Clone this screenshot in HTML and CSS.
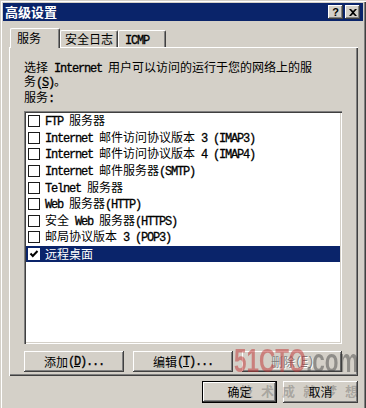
FILE: index.html
```html
<!DOCTYPE html>
<html lang="zh-CN">
<head>
<meta charset="utf-8">
<title>高级设置</title>
<link rel="stylesheet" href="styles.css">
</head>
<body>
<div class="window">
  <div class="titlebar">
    <span class="title">高级设置</span>
    <div class="tbtns">
      <span class="tbtn help">?</span>
      <span class="tbtn"><svg width="8" height="7" viewBox="0 0 8 7"><path d="M0 0h2l2 2 2-2h2L5 3.5 8 7H6L4 5 2 7H0l3-3.5z" fill="#000"/></svg></span>
    </div>
  </div>
  <div class="tabs">
    <div class="tab sel t1">服务</div>
    <div class="tab t2">安全日志</div>
    <div class="tab t3"><span class="a">ICMP</span></div>
  </div>
  <div class="panel">
    <p class="desc">选择<span class="a"> Internet </span>用户可以访问的运行于您的网络上的服<br>务<span class="a">(<u>S</u>)</span>。</p>
    <p class="label">服务<span class="a">:</span></p>
    <div class="list">
      <div class="row"><span class="cb"></span><span class="txt"><span class="a">FTP </span>服务器</span></div>
      <div class="row"><span class="cb"></span><span class="txt"><span class="a">Internet </span>邮件访问协议版本<span class="a"> 3 (IMAP3)</span></span></div>
      <div class="row"><span class="cb"></span><span class="txt"><span class="a">Internet </span>邮件访问协议版本<span class="a"> 4 (IMAP4)</span></span></div>
      <div class="row"><span class="cb"></span><span class="txt"><span class="a">Internet </span>邮件服务器<span class="a">(SMTP)</span></span></div>
      <div class="row"><span class="cb"></span><span class="txt"><span class="a">Telnet </span>服务器</span></div>
      <div class="row"><span class="cb"></span><span class="txt"><span class="a">Web </span>服务器<span class="a">(HTTP)</span></span></div>
      <div class="row"><span class="cb"></span><span class="txt">安全<span class="a"> Web </span>服务器<span class="a">(HTTPS)</span></span></div>
      <div class="row"><span class="cb"></span><span class="txt">邮局协议版本<span class="a"> 3 (POP3)</span></span></div>
      <div class="row selected"><span class="cb checked"><svg width="10" height="10" viewBox="0 0 10 10"><polyline points="1.5,4.5 3.8,7 8.5,2" fill="none" stroke="#000" stroke-width="2"/></svg></span><span class="txt">远程桌面</span></div>
    </div>
    <div class="btnrow">
      <span class="btn">添加<span class="a">(<u>D</u>)...</span></span>
      <span class="btn">编辑<span class="a">(<u>T</u>)...</span></span>
      <span class="btn disabled">删除<span class="a">(<u>E</u>)</span></span>
    </div>
  </div>
  <div class="footer">
    <span class="btn fbtn default">确定</span>
    <span class="btn fbtn">取消</span>
  </div>
  <div class="wm"><span class="r">51CTO</span><span class="g">.com</span></div>
  <div class="wm2">技术成就梦想</div>
</div>
</body>
</html>
```
FILE: styles.css
```css
html, body {
  margin: 0;
  padding: 0;
  overflow: hidden;
  background: #d4d0c8;
}
body {
  font-family: "Noto Sans CJK SC", sans-serif;
  font-size: 12px;
  color: #000;
}
.window {
  position: relative;
  width: 366px;
  height: 416px;
  box-sizing: border-box;
  padding: 3px;
  background: #d4d0c8;
  box-shadow: inset 1px 1px #d4d0c8, inset 2px 2px #fff, inset -1px -1px #404040, inset -2px -2px #808080;
}
.a {
  font-family: "Liberation Mono", monospace;
  font-size: 12px;
  letter-spacing: -1.2px;
  -webkit-text-stroke: 0.3px currentColor;
}
.titlebar {
  height: 18px;
  background: #0a246a;
  display: flex;
  align-items: center;
  justify-content: space-between;
  padding: 0 3px 0 2px;
}
.title {
  color: #fff;
  font-weight: bold;
  font-size: 13px;
  line-height: 18px;
}
.tbtns {
  display: flex;
  gap: 2px;
}
.tbtn {
  width: 15px;
  height: 14px;
  box-sizing: border-box;
  background: #d4d0c8;
  box-shadow: inset -1px -1px #404040, inset 1px 1px #fff, inset -2px -2px #808080;
  display: flex;
  align-items: center;
  justify-content: center;
}
.help {
  font-family: "Liberation Sans", sans-serif;
  font-weight: bold;
  font-size: 11px;
  line-height: 14px;
}
.tabs {
  display: flex;
  align-items: flex-end;
  height: 20px;
  margin: 7px 0 0 7px;
  position: relative;
  z-index: 1;
}
.tab {
  box-sizing: border-box;
  height: 17px;
  margin-bottom: 1px;
  padding-top: 1px;
  line-height: 14px;
  border-left: 1px solid #fff;
  border-top: 1px solid #fff;
  border-right: 1px solid #404040;
  border-radius: 2px 2px 0 0;
  box-shadow: inset -1px 0 #808080;
  background: #d4d0c8;
}
.tab.sel {
  height: 20px;
  margin-bottom: 0;
  padding-top: 2px;
}
.t1 { width: 50px; padding-left: 6px; }
.t2 { width: 58px; padding-left: 4px; }
.t3 { width: 48px; padding-left: 6px; }
.panel {
  margin: -1px 5px 0 6px;
  height: 329px;
  box-sizing: border-box;
  padding: 14px 0 0 15px;
  box-shadow: inset 1px 1px #fff, inset -1px -1px #404040, inset -2px -2px #808080;
}
.desc {
  margin: 0;
  line-height: 12px;
}
.label {
  margin: 2px 0 0;
  line-height: 12px;
}
.list {
  margin-top: 6px;
  width: 318px;
  height: 233px;
  box-sizing: border-box;
  padding: 2px;
  background: #fff;
  box-shadow: inset 1px 1px #808080, inset 2px 2px #404040, inset -1px -1px #fff, inset -2px -2px #d4d0c8;
}
.row {
  height: 16.6px;
  display: flex;
  align-items: center;
  gap: 5px;
  padding-left: 2px;
  white-space: nowrap;
}
.row.selected {
  background: #0a246a;
  color: #fff;
}
.cb {
  width: 12px;
  height: 12px;
  box-sizing: border-box;
  border: 1px solid #1a1a1a;
  background: #fff;
  flex: none;
  display: flex;
}
.row.selected .cb {
  border-color: #fff;
}
.txt {
  line-height: 14px;
}
.btnrow {
  margin-top: 7px;
  display: flex;
  gap: 9px;
}
.btn {
  box-sizing: border-box;
  width: 100px;
  height: 21px;
  display: flex;
  align-items: center;
  justify-content: center;
  line-height: 14px;
  background: #d4d0c8;
  box-shadow: inset -1px -1px #404040, inset 1px 1px #fff, inset -2px -2px #808080;
  white-space: nowrap;
}
.btn.disabled {
  color: #808080;
  text-shadow: 1px 1px 0 #fff;
}
.btn.disabled .a {
  -webkit-text-stroke: 0;
}
.footer {
  display: flex;
  justify-content: flex-end;
  gap: 6px;
  margin: 5px 5px 0 0;
}
.fbtn {
  width: 75px;
  height: 22px;
}
.fbtn.default {
  border: 1px solid #000;
}
.wm {
  position: absolute;
  right: 8px;
  top: 343px;
  font-family: "Liberation Sans", sans-serif;
  font-weight: bold;
  font-size: 34px;
  line-height: 1;
  white-space: nowrap;
  transform: scaleX(0.66);
  transform-origin: right top;
  pointer-events: none;
}
.wm .r { color: rgba(192, 48, 48, 0.5); }
.wm .g { color: rgba(60, 60, 60, 0.45); }
.wm2 {
  position: absolute;
  left: 240px;
  top: 381px;
  font-weight: bold;
  font-size: 13px;
  line-height: 20px;
  letter-spacing: 8px;
  color: rgba(60, 60, 60, 0.3);
  white-space: nowrap;
  pointer-events: none;
}
```
